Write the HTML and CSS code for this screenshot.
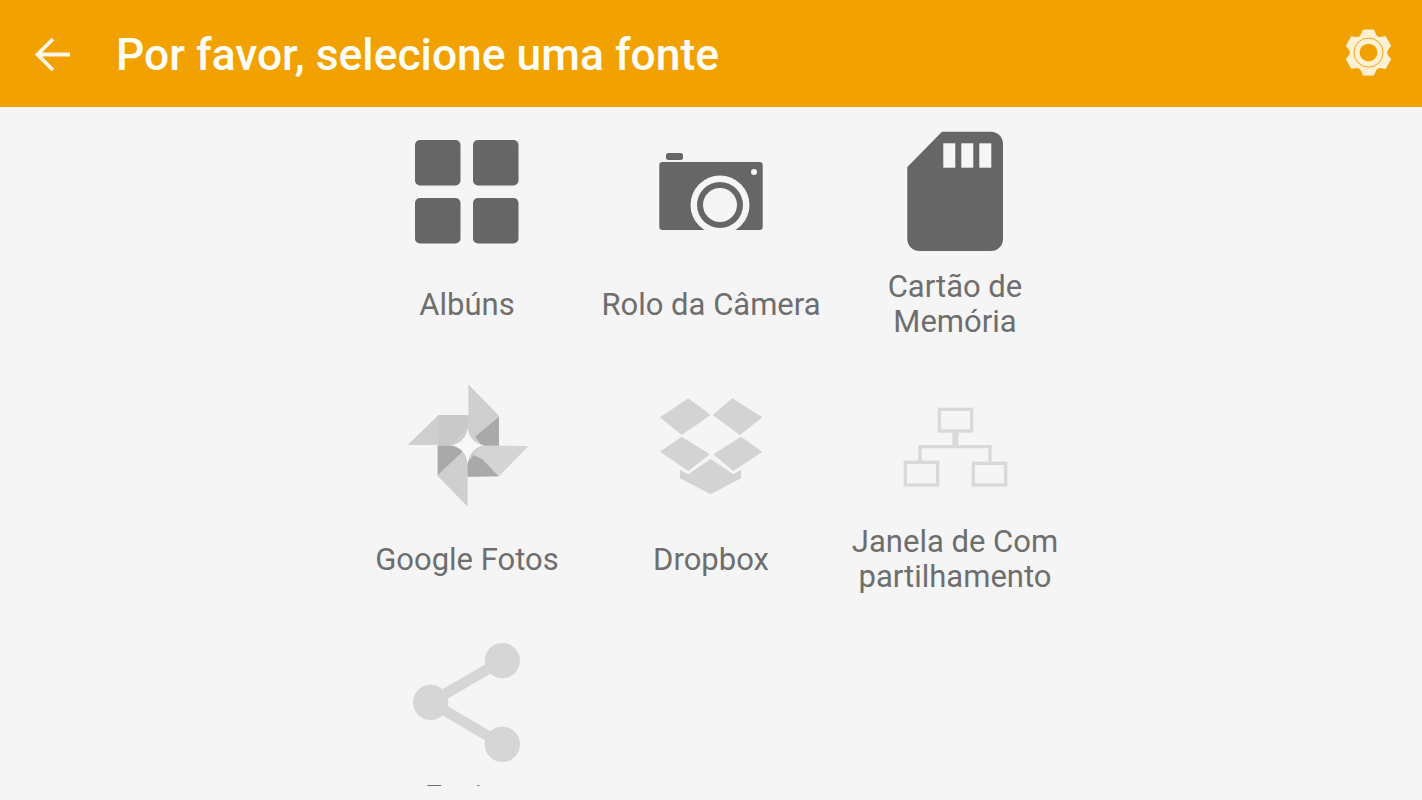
FILE: index.html
```html
<!DOCTYPE html>
<html lang="pt">
<head>
<meta charset="utf-8">
<title>Por favor, selecione uma fonte</title>
<link rel="stylesheet" href="styles.css">
</head>
<body>
<header class="bar">
  <svg class="back" viewBox="0 0 36 36" aria-hidden="true"><path d="M35 18.500H2.500M18 3L2.500 18.500L18 34"/></svg>
  <h1 class="title">Por favor, selecione uma fonte</h1>
  <svg class="gear" viewBox="-25 -26 50 54" aria-hidden="true">
    <g class="gear-body">
      <circle r="19.500"/>
      <polygon id="tooth" points="-5.500,-24 5.500,-24 9,-16 -9,-16"/>
      <use href="#tooth" transform="rotate(60)"/>
      <use href="#tooth" transform="rotate(120)"/>
      <use href="#tooth" transform="rotate(180)"/>
      <use href="#tooth" transform="rotate(240)"/>
      <use href="#tooth" transform="rotate(300)"/>
    </g>
    <circle class="gear-line" r="15.500"/>
    <circle class="gear-hole" r="9.500"/>
  </svg>
</header>
<main class="content">
  <div class="grid">
    <div class="tile">
      <svg class="icon" viewBox="0 0 128 128" aria-hidden="true">
        <g class="solid">
          <rect x="12" y="13" width="45.500" height="45.500" rx="5"/>
          <rect x="70" y="13" width="45.500" height="45.500" rx="5"/>
          <rect x="12" y="71" width="45.500" height="45.500" rx="5"/>
          <rect x="70" y="71" width="45.500" height="45.500" rx="5"/>
        </g>
      </svg>
      <p class="label">Albúns</p>
    </div>
    <div class="tile">
      <svg class="icon" viewBox="0 0 128 128" aria-hidden="true">
        <g class="solid">
          <rect x="19" y="26" width="17" height="7" rx="2.500"/>
          <rect x="12.300" y="35" width="103.400" height="68" rx="3"/>
        </g>
        <circle class="cut" cx="73" cy="78" r="29.500"/>
        <circle class="solid" cx="73" cy="78" r="23"/>
        <circle class="cut" cx="73" cy="78" r="17"/>
        <circle class="cut" cx="107" cy="45" r="3"/>
      </svg>
      <p class="label">Rolo da Câmera</p>
    </div>
    <div class="tile">
      <svg class="icon" viewBox="0 0 128 128" aria-hidden="true">
        <path class="solid" d="M51 4.700H100A12 12 0 0 1 112 16.700V112A12 12 0 0 1 100 124H28.300A12 12 0 0 1 16.300 112V40Z"/>
        <rect class="cut" x="52.300" y="16.300" width="12" height="24.400"/>
        <rect class="cut" x="70.300" y="16.300" width="12" height="24.400"/>
        <rect class="cut" x="88.300" y="16.300" width="12" height="24.400"/>
      </svg>
      <p class="label">Cartão de<br>Memória</p>
    </div>
    <div class="tile">
      <svg class="icon" viewBox="24 21 384 384" aria-hidden="true">
        <polygon class="p-light" points="220,28 312,122 312,305 218,305 218,395 128,303 128,210 38,210 130,120 220,120"/>
        <polygon class="p-light" points="400,213 312,303 240,300 240,213"/>
        <polygon class="p-mid" points="130,120 220,120 218,160 168,210 130,210"/>
        <polygon class="p-dark" points="312,125 312,212 262,212 240,185"/>
        <polygon class="p-dark" points="128,212 176,212 205,228 128,300"/>
        <polygon class="p-dark" points="236,240 262,252 310,303 218,305 218,262"/>
        <polygon class="p-soft" points="400,213 262,212 236,240 262,252 312,303"/>
        <path class="p-star" d="M218 158Q224 204 270 211Q224 218 218 268Q212 218 166 211Q212 204 218 158Z"/>
      </svg>
      <p class="label">Google Fotos</p>
    </div>
    <div class="tile">
      <svg class="icon" viewBox="6 -9 384 384" aria-hidden="true">
        <g class="faint">
          <polygon points="45,97 130,40 197,90 110,150"/>
          <polygon points="203,90 262,40 352,97 285,150"/>
          <polygon points="45,200 110,155 195,208 130,258"/>
          <polygon points="205,208 288,155 352,200 265,258"/>
          <polygon points="105,255 130,268 197,222 265,268 288,255 288,280 197,328 105,280"/>
        </g>
      </svg>
      <p class="label">Dropbox</p>
    </div>
    <div class="tile">
      <svg class="icon" viewBox="3 -39 384 384" aria-hidden="true">
        <g class="net">
          <rect x="148" y="43" width="97" height="65"/>
          <rect x="46" y="202" width="97" height="68"/>
          <rect x="250" y="205" width="97" height="65"/>
          <path d="M90 200V155H300V205"/>
          <path class="net-stem" d="M196 108V155"/>
        </g>
      </svg>
      <p class="label">Janela de Com<br>partilhamento</p>
    </div>
    <div class="tile">
      <svg class="icon" viewBox="24 21 384 384" aria-hidden="true">
        <path class="share-line" d="M322 92L107 217L322 343"/>
        <g class="share-dot">
          <circle cx="322" cy="92" r="53"/>
          <circle cx="107" cy="217" r="53"/>
          <circle cx="322" cy="343" r="53"/>
        </g>
      </svg>
      <p class="label">Enviar<br>para</p>
    </div>
  </div>
</main>
</body>
</html>
```
FILE: styles.css
```css
* { box-sizing: border-box; }

html, body {
  margin: 0;
  height: 800px;
  overflow: hidden;
}

body {
  background: #f5f5f5;
  font-family: Roboto, "Liberation Sans", sans-serif;
}

.bar {
  display: flex;
  align-items: center;
  height: 107px;
  padding: 0 30px 0 35px;
  background: #f1a200;
}

.back {
  flex: none;
  width: 36px;
  height: 36px;
  fill: none;
  stroke: #fdf6e8;
  stroke-width: 3.8;
}

.title {
  flex: 1;
  margin: 2px 0 0 45px;
  color: #fffdf8;
  font-size: 44.4px;
  font-weight: 500;
  line-height: 48px;
}

.gear {
  flex: none;
  width: 47px;
  height: 51px;
}

.gear-body {
  fill: #fdf0d5;
  stroke: #fdf0d5;
  stroke-width: 1;
  stroke-linejoin: round;
}

.gear-line {
  fill: none;
  stroke: #f1a200;
  stroke-width: 1;
}

.gear-hole { fill: #f1a200; }

.content {
  height: 679px;
  padding-top: 20px;
  overflow: hidden;
}

.grid {
  display: grid;
  grid-template-columns: repeat(3, 244px);
  justify-content: center;
  row-gap: 43px;
}

.tile {
  display: flex;
  flex-direction: column;
  align-items: center;
}

.icon {
  display: block;
  width: 128px;
  height: 128px;
}

.label {
  display: flex;
  align-items: center;
  justify-content: center;
  height: 70px;
  margin: 14px 0 0;
  color: #6e6e6e;
  font-size: 31px;
  line-height: 35px;
  text-align: center;
}

.solid { fill: #666666; }
.cut { fill: #f5f5f5; }
.faint { fill: #d3d3d3; }

.p-light { fill: #cfcfcf; }
.p-soft { fill: #d4d4d4; }
.p-mid { fill: #c9c9c9; }
.p-dark { fill: #a9a9a9; }
.p-star { fill: #f8f8f8; }

.net {
  fill: none;
  stroke: #d9d9d9;
  stroke-width: 10;
}

.net-stem { stroke-width: 18; }

.share-line {
  fill: none;
  stroke: #d6d6d6;
  stroke-width: 32;
}

.share-dot { fill: #d6d6d6; }
```
